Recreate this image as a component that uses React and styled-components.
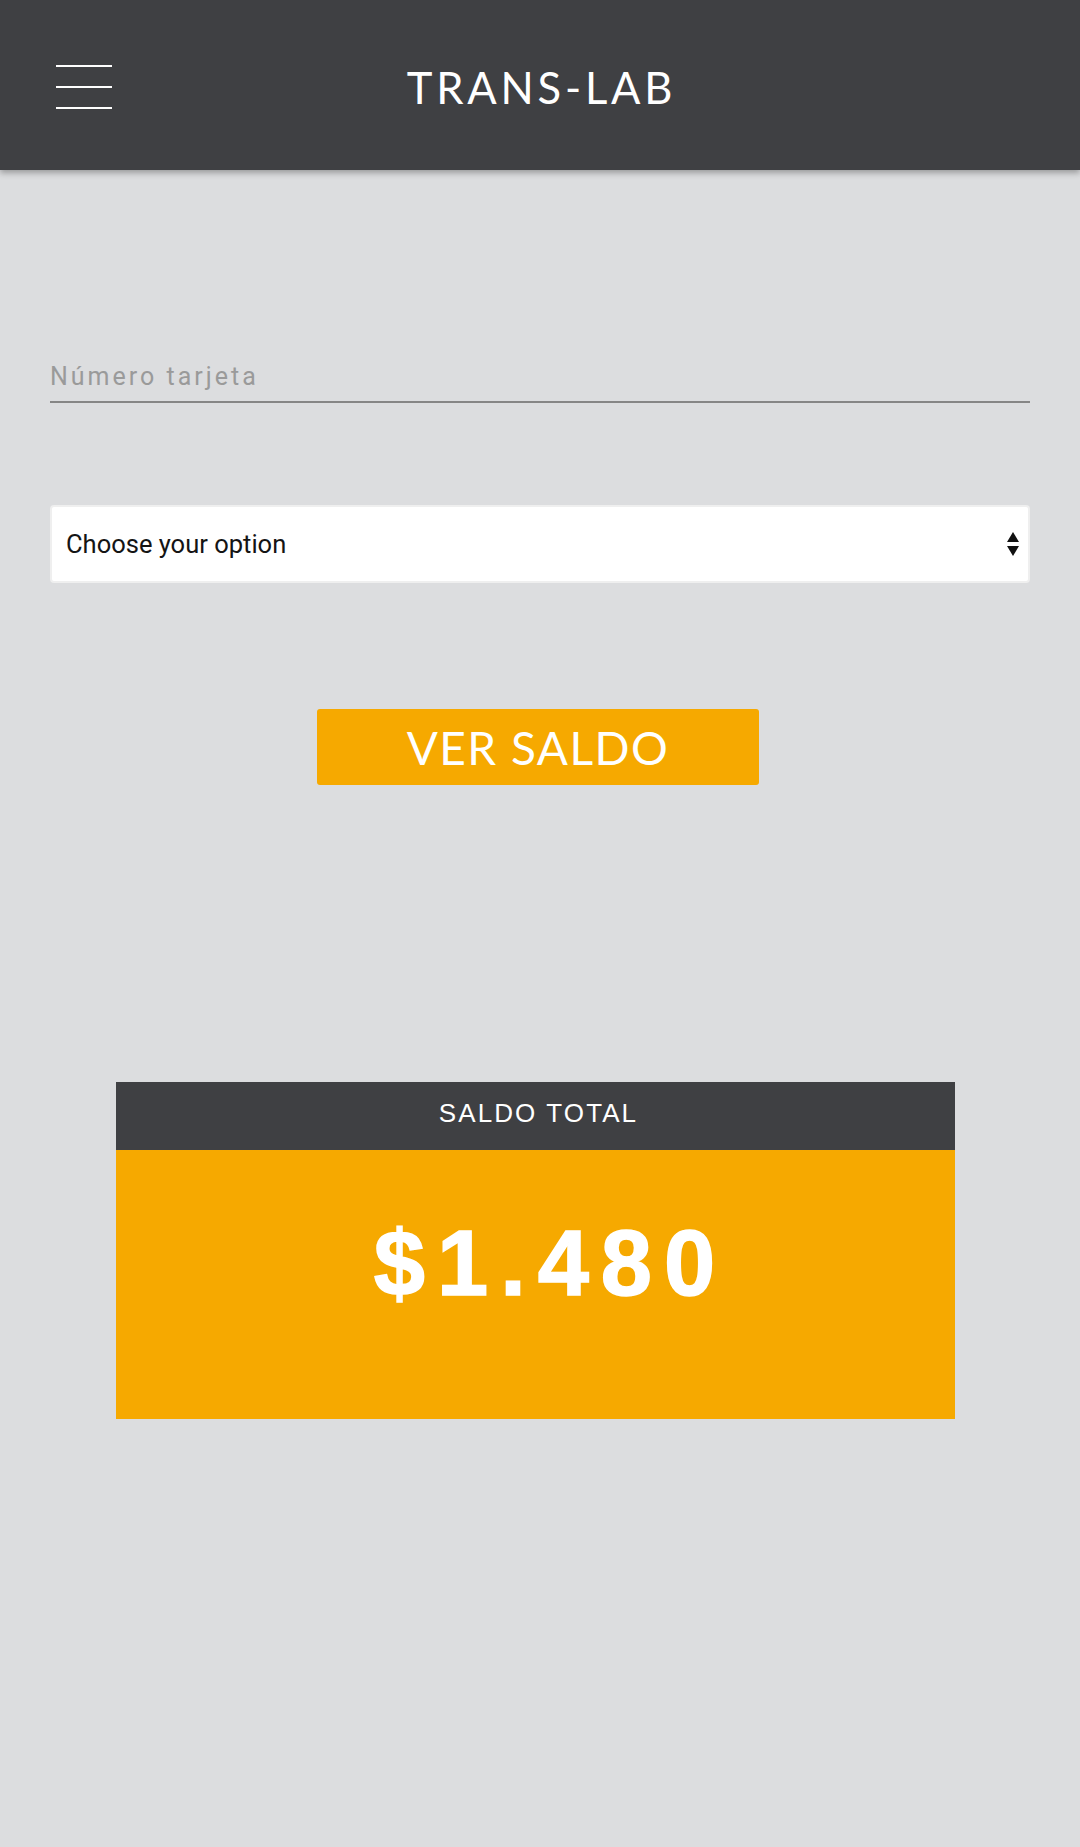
import React from "react";
import styled, { createGlobalStyle } from "styled-components";

const Global = createGlobalStyle`
  html, body { margin: 0; padding: 0; }
  body {
    background: #dcdddf;
    font-family: "Lato", "Liberation Sans", sans-serif;
  }
  * { box-sizing: border-box; }
`;

const Page = styled.div`
  min-height: 1847px;
  background: #dcdddf;
`;

const Header = styled.header`
  height: 170px;
  background: #3f4043;
  box-shadow: 0 3px 6px rgba(0, 0, 0, 0.3);
  display: grid;
  grid-template-columns: 1fr auto 1fr;
  align-items: center;
  padding: 4px 56px 0;
`;

const Burger = styled.button`
  display: flex;
  flex-direction: column;
  gap: 19px;
  width: 56px;
  padding: 0;
  border: 0;
  background: none;
  justify-self: start;
`;

const BurgerLine = styled.span`
  display: block;
  height: 2px;
  width: 100%;
  background: #ffffff;
`;

const Title = styled.h1`
  margin: 0;
  color: #ffffff;
  font-family: "Lato", "Liberation Sans", sans-serif;
  font-weight: 400;
  font-size: 43.5px;
  letter-spacing: 3.8px;
  margin-right: -3px;
`;

const Main = styled.main`
  padding: 183px 50px 0;
  display: flex;
  flex-direction: column;
`;

const CardInput = styled.input`
  height: 50px;
  width: 100%;
  border: 0;
  border-bottom: 2px solid #868686;
  background: transparent;
  outline: none;
  padding: 0 0 2px;
  font-family: "Roboto", "Liberation Sans", sans-serif;
  font-size: 25px;
  letter-spacing: 3px;
  color: #333;
  &::placeholder {
    color: #9a9a9a;
  }
`;

const SelectWrap = styled.div`
  position: relative;
  margin-top: 102px;
`;

const Select = styled.select`
  appearance: none;
  -webkit-appearance: none;
  width: 100%;
  height: 78px;
  border: 2px solid #efefef;
  border-radius: 4px;
  background: #ffffff;
  padding: 0 40px 0 14px;
  font-family: "Roboto", "Liberation Sans", sans-serif;
  font-weight: 400;
  font-size: 25.5px;
  color: #141414;
  outline: none;
`;

const SelectArrows = styled.svg`
  position: absolute;
  right: 10px;
  top: 50%;
  transform: translateY(-50%);
  pointer-events: none;
`;

const ButtonRow = styled.div`
  display: flex;
  justify-content: center;
  margin-top: 126px;
`;

const ActionButton = styled.button`
  width: 442px;
  height: 76px;
  margin-left: -4px;
  border: 0;
  border-radius: 3px;
  background: #f6a900;
  color: #ffffff;
  font-family: "Lato", "Liberation Sans", sans-serif;
  font-weight: 400;
  font-size: 46px;
  letter-spacing: 1.5px;
  padding: 0;
`;

const BalanceCard = styled.section`
  margin-top: 297px;
  margin-left: 66px;
  width: 839px;
  display: flex;
  flex-direction: column;
`;

const CardHead = styled.div`
  height: 68px;
  background: #3f4043;
  color: #ffffff;
  display: flex;
  align-items: center;
  justify-content: center;
  font-family: "Liberation Sans", Arial, sans-serif;
  font-size: 26px;
  letter-spacing: 2.1px;
  padding: 0 0 6px 6px;
`;

const CardBody = styled.div`
  height: 269px;
  background: #f6a900;
  display: flex;
  justify-content: center;
  padding-top: 58px;
`;

const Amount = styled.div`
  color: #ffffff;
  font-family: "Liberation Sans", Arial, sans-serif;
  font-weight: 700;
  font-size: 92px;
  letter-spacing: 12px;
  line-height: 1.2;
  margin-left: 30px;
  -webkit-text-stroke: 1.5px #ffffff;
`;

export default function App() {
  return (
    <Page>
      <Global />
      <Header>
        <Burger aria-label="menu">
          <BurgerLine />
          <BurgerLine />
          <BurgerLine />
        </Burger>
        <Title>TRANS-LAB</Title>
        <div />
      </Header>
      <Main>
        <CardInput placeholder="Número tarjeta" />
        <SelectWrap>
          <Select defaultValue="">
            <option value="" disabled>
              Choose your option
            </option>
            <option value="1">Option 1</option>
            <option value="2">Option 2</option>
          </Select>
          <SelectArrows width="14" height="26" viewBox="0 0 14 26">
            <path d="M7 1 L13 11 L1 11 Z" fill="#111" />
            <path d="M1 15 L13 15 L7 25 Z" fill="#111" />
          </SelectArrows>
        </SelectWrap>
        <ButtonRow>
          <ActionButton>VER SALDO</ActionButton>
        </ButtonRow>
        <BalanceCard>
          <CardHead>SALDO TOTAL</CardHead>
          <CardBody>
            <Amount>$1.480</Amount>
          </CardBody>
        </BalanceCard>
      </Main>
    </Page>
  );
}
